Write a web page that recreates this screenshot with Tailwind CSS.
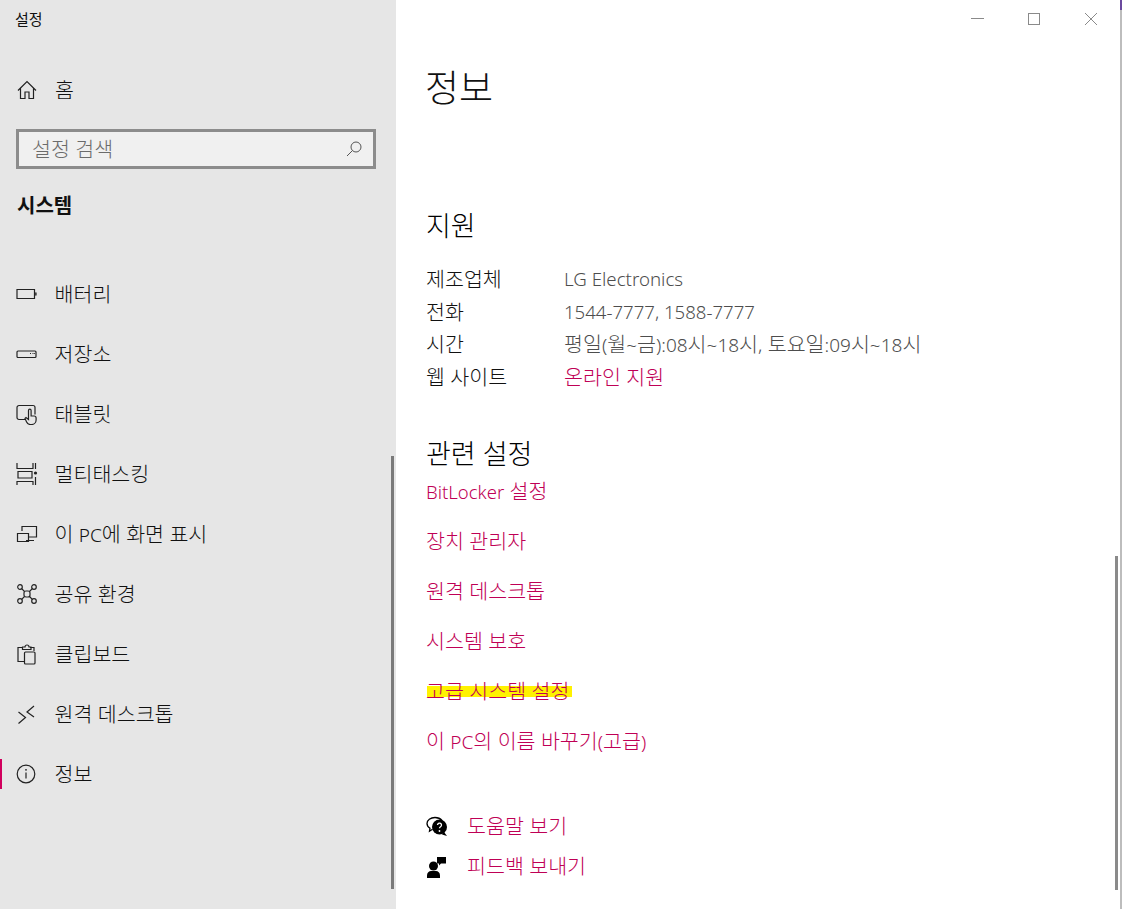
<!DOCTYPE html>
<html lang="ko">
<head>
  <meta charset="UTF-8" />
  <title>설정</title>
  <script src="https://cdn.jsdelivr.net/npm/@tailwindcss/browser@4"></script>
</head>
<body class="w-[1122px] h-[909px] overflow-hidden bg-white font-['Noto_Sans','Noto_Sans_CJK_KR',sans-serif] font-light text-[20.6px] leading-none">
  <div class="flex h-[909px]">
    <!-- sidebar -->
    <aside class="relative w-[396px] h-full shrink-0 bg-[#e6e6e6] text-[#111]">
      <div class="h-[38px] pl-[15px] pt-[10px] text-[15px] leading-[18px] font-normal">설정</div>
      <div class="flex items-center h-[60px] mt-[22px] pl-[17px]">
        <svg class="w-[20px] h-[20px] mr-[18px]" viewBox="0 0 20 20" fill="none" stroke="#222" stroke-width="1.2"><path d="M1 10.500 10 1.500l9 9M3.500 8.500V18.500H8V12h4v6.500h4.500V8.500"/></svg>
        <span>홈</span>
      </div>
      <div class="flex items-center justify-between w-[360px] h-[40px] ml-[16px] mt-[9px] pl-[13px] pr-[11px] bg-[#f0f0f0] border-[3px] border-[#8c8c8c] text-[#6b6b6b]">
        <span>설정 검색</span>
        <svg class="w-[16px] h-[16px]" viewBox="0 0 16 16" fill="none" stroke="#555" stroke-width="1"><circle cx="10" cy="6" r="5"/><path d="M6.500 9.500 1 15"/></svg>
      </div>
      <div class="h-[34px] pl-[17px] pt-[26px] box-content font-bold text-[#111] text-[20px] leading-[22px]">시스템</div>

      <nav class="mt-[35px]">
        <a class="flex items-center h-[60px] pl-[16px]">
          <svg class="w-[22px] h-[22px] mr-[16.5px]" viewBox="0 0 22 22" fill="none" stroke="#222" stroke-width="1.200"><path d="M1 6.500h17.500v9H1zM18.500 10h1.500v2h-1.500"/></svg><span>배터리</span>
        </a>
        <a class="flex items-center h-[60px] pl-[16px]">
          <svg class="w-[22px] h-[22px] mr-[16.5px]" viewBox="0 0 22 22" fill="none" stroke="#222" stroke-width="1.200"><rect x="1" y="8" width="19" height="6.500" rx="1"/><path d="M14 10.500h1M16.500 10.500h1M18 10.500h.8"/></svg><span>저장소</span>
        </a>
        <a class="flex items-center h-[60px] pl-[16px]">
          <svg class="w-[22px] h-[22px] mr-[16.5px]" viewBox="0 0 22 22" fill="none" stroke="#222" stroke-width="1.200"><path d="M9 16.500H3a2 2 0 0 1-2-2V4.500a2 2 0 0 1 2-2h14a2 2 0 0 1 2 2v7"/><path d="M12.500 7.500a1.300 1.300 0 0 1 2.600 0V13h3a2 2 0 0 1 2 2v2a4.500 4.500 0 0 1-4.500 4.500h-1.500a4 4 0 0 1-3.500-2.500L9 15.500l1-1 2.500 2z"/></svg><span>태블릿</span>
        </a>
        <a class="flex items-center h-[60px] pl-[16px]">
          <svg class="w-[22px] h-[22px] mr-[16.5px]" viewBox="0 0 22 22" fill="none" stroke="#222" stroke-width="1.200"><path d="M1 0v5.500h16V0M2 8.500h14V15H2zM1 22v-3.500h16V22M19.500 0v6M19.500 14v8"/><circle cx="19.500" cy="10" r="1.600" fill="#222" stroke="none"/></svg><span>멀티태스킹</span>
        </a>
        <a class="flex items-center h-[60px] pl-[16px]">
          <svg class="w-[22px] h-[22px] mr-[16.5px]" viewBox="0 0 22 22" fill="none" stroke="#222" stroke-width="1.200"><path d="M6 8V3.500h14.500V14H13M10 17.500h8"/><path d="M1.500 10.500H12.500V18.500H1.500z"/></svg><span>이 <span class="text-[19px]">PC</span>에 화면 표시</span>
        </a>
        <a class="flex items-center h-[60px] pl-[16px]">
          <svg class="w-[22px] h-[22px] mr-[16.5px]" viewBox="0 0 22 22" fill="none" stroke="#222" stroke-width="1.200"><circle cx="4" cy="4" r="2.300"/><circle cx="18" cy="4" r="2.300"/><circle cx="4" cy="18" r="2.300"/><circle cx="18" cy="18" r="2.300"/><rect x="8" y="8" width="6" height="6" rx="2"/><path d="m5.700 5.700 2.800 2.800M16.300 5.700l-2.800 2.800M5.700 16.300l2.800-2.800M16.300 16.300l-2.800-2.800"/></svg><span>공유 환경</span>
        </a>
        <a class="flex items-center h-[60px] pl-[16px]">
          <svg class="w-[22px] h-[22px] mr-[16.5px]" viewBox="0 0 22 22" fill="none" stroke="#222" stroke-width="1.200"><path d="M8 18.500H2V4.500h5M14 4.500h4V8"/><path d="M6.500 6.500V4h2.500a2 2 0 0 1 4 0h2v2.500z"/><rect x="8.500" y="9" width="10.500" height="12" rx="1"/></svg><span>클립보드</span>
        </a>
        <a class="flex items-center h-[60px] pl-[16px]">
          <svg class="w-[22px] h-[22px] mr-[16.5px]" viewBox="0 0 22 22" fill="none" stroke="#222" stroke-width="1.200"><path d="m2.500 9 7 5.500-7 6M18 3l-7 6 7 5"/></svg><span>원격 데스크톱</span>
        </a>
        <a class="relative flex items-center h-[60px] pl-[16px]">
          <span class="absolute left-0 top-[15px] w-[2px] h-[30px] bg-[#d1005d]"></span>
          <svg class="w-[22px] h-[22px] mr-[16.5px]" viewBox="0 0 22 22" fill="none" stroke="#222" stroke-width="1.200"><circle cx="10" cy="11" r="8.800"/><path d="M10 9.500v6"/><circle cx="10" cy="6.800" r=".9" fill="#222" stroke="none"/></svg><span>정보</span>
        </a>
      </nav>
      <div class="absolute left-[391px] top-[456px] w-[3px] h-[433px] bg-[#7a7a7a]"></div>
    </aside>

    <!-- content -->
    <main class="relative flex-1 pl-[29px] text-[#111]">
      <h1 class="h-[50px] mt-[63px] text-[37px] leading-[50px]">정보</h1>

      <h2 class="mt-[97px] ml-[1px] h-[32px] text-[27px] leading-[32px] text-black">지원</h2>
      <div class="mt-[21px] ml-[1px] grid grid-cols-[138px_1fr] auto-rows-[32.7px] items-center">
        <div>제조업체</div><div class="text-[#4d4d4d] text-[18.7px]">LG Electronics</div>
        <div>전화</div><div class="text-[#4d4d4d] text-[18.6px]">1544-7777, 1588-7777</div>
        <div>시간</div><div class="text-[#4d4d4d]">평일<span class="text-[19px]">(</span>월<span class="text-[19px]">~</span>금<span class="text-[19px]">):08</span>시<span class="text-[19px]">~18</span>시<span class="text-[19px]">,</span> 토요일<span class="text-[19px]">:09</span>시<span class="text-[19px]">~18</span>시</div>
        <div>웹 사이트</div><div class="text-[#bf0055]">온라인 지원</div>
      </div>

      <h2 class="mt-[44px] ml-[1px] h-[32px] text-[27px] leading-[32px] text-black">관련 설정</h2>
      <div class="mt-[4px] ml-[1px] flex flex-col text-[#bf0055]">
        <a class="h-[50px] leading-[34px]"><span class="text-[18.5px]">BitLocker</span> 설정</a>
        <a class="h-[50px] leading-[34px]">장치 관리자</a>
        <a class="h-[50px] leading-[34px]">원격 데스크톱</a>
        <a class="h-[50px] leading-[34px]">시스템 보호</a>
        <a class="relative h-[50px] leading-[34px]"><span class="absolute left-[1px] top-[12px] w-[145px] h-[11px] bg-[#fff200]"></span><span class="relative">고급 시스템 설정</span></a>
        <a class="h-[50px] leading-[34px]">이 <span class="text-[19px]">PC</span>의 이름 바꾸기<span class="text-[19px]">(</span>고급<span class="text-[19px]">)</span></a>
      </div>

      <div class="mt-[33px] ml-[1px] flex flex-col text-[#bf0055]">
        <a class="flex items-center h-[40px]">
          <svg class="w-[22px] h-[22px] mr-[19px]" viewBox="0 0 22 22"><path d="M9 1.500C4.500 1.500 1 4 1 7.500c0 2 1 3.500 3 4.700l-.5 3 3-2" fill="none" stroke="#000" stroke-width="1.300"/><path d="M9 1.500c3 0 5.500 1.200 7 3" fill="none" stroke="#000" stroke-width="1.300"/><circle cx="13.500" cy="11" r="7.500" fill="#000"/><path d="m18 16 3 4-5-1.500z" fill="#000"/><path d="M11.500 9a2 2 0 1 1 3 1.800c-.7.400-1 .8-1 1.500" fill="none" stroke="#fff" stroke-width="1.300"/><circle cx="13.500" cy="15" r=".9" fill="#fff"/></svg><span>도움말 보기</span>
        </a>
        <a class="flex items-center h-[40px]">
          <svg class="w-[22px] h-[22px] mr-[19px]" viewBox="0 0 22 22" fill="#000"><circle cx="7.500" cy="10" r="4.500"/><path d="M1 22v-2.500C1 16.500 3 15 5 15h5c2 0 4 1.500 4 4.500V22z"/><path d="M11 1h9v6.500h-5l-2 2v-2h-2z"/></svg><span>피드백 보내기</span>
        </a>
      </div>

      <!-- window buttons -->
      <div class="absolute left-[575px] top-[18px] w-[13px] h-[1px] bg-[#8a8a8a]"></div>
      <div class="absolute left-[632px] top-[13px] w-[12px] h-[12px] border border-[#8a8a8a]"></div>
      <svg class="absolute left-[688px] top-[12px] w-[14px] h-[14px]" viewBox="0 0 14 14" stroke="#8a8a8a" stroke-width="1"><path d="m1 1 12 12M13 1 1 13"/></svg>
      <div class="absolute left-[719px] top-[556px] w-[3px] h-[334px] bg-[#8a8a8a]"></div>
      <div class="absolute left-[724px] top-[10px] bottom-0 w-[2px] bg-[#bdbdbd]"></div>
      <div class="absolute left-[724px] top-0 h-[10px] w-[2px] bg-[#6b4a9e]"></div>
    </main>
  </div>
</body>
</html>
